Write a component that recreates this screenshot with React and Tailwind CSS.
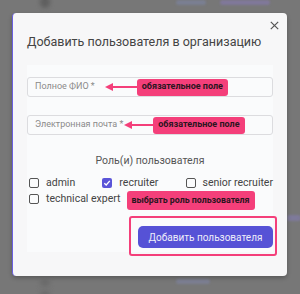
import React from "react";

function Arrow({ width }) {
  return (
    <svg width={width} height="10" viewBox={`0 0 ${width} 10`} className="shrink-0">
      <line x1="3" y1="5" x2={width} y2="5" stroke="#f43f7a" strokeWidth="2" />
      <path d="M0 5 L8 1 L8 9 Z" fill="#f43f7a" />
    </svg>
  );
}

function Badge({ children, className = "" }) {
  return (
    <div
      className={
        "flex items-center rounded-[3px] bg-[#f43f7a] px-[5px] font-bold text-[#2a1520] " +
        className
      }
    >
      {children}
    </div>
  );
}

function Check({ checked, label }) {
  return (
    <div className="flex items-center gap-[7px]">
      {checked ? (
        <div className="flex h-[10px] w-[10px] items-center justify-center rounded-[2px] bg-[#5a54d8]">
          <svg width="8" height="8" viewBox="0 0 8 8">
            <path d="M1.3 4.2 L3.2 6 L6.8 1.8" fill="none" stroke="white" strokeWidth="1.3" />
          </svg>
        </div>
      ) : (
        <div className="h-[10px] w-[10px] rounded-[2px] border-[1.5px] border-[#555]" />
      )}
      <span className="text-[10.5px] leading-[12px] text-[#444]">{label}</span>
    </div>
  );
}

export default function App() {
  return (
    <div
      className="relative h-[294px] w-[300px] overflow-hidden bg-[#777777]"
      style={{ fontFamily: "Roboto, 'Noto Sans', sans-serif" }}
    >
      {/* blurred page behind overlay */}
      <div className="absolute left-[40px] top-[-4px] h-[12px] w-[10px] rounded-full bg-[#5f5f5f] blur-[2px]" />
      <div className="absolute left-[176px] top-[0px] h-[5px] w-[30px] rounded bg-[#7a7f92] blur-[1px]" />
      <div className="absolute left-[220px] top-[0px] h-[5px] w-[50px] rounded bg-[#80789a] blur-[1px]" />
      <div className="absolute left-[40px] top-[280px] h-[6px] w-[10px] rounded-full bg-[#6a6a6a] blur-[2px]" />
      <div className="absolute left-[40px] top-[291px] h-[6px] w-[10px] rounded-full bg-[#6a6a6a] blur-[2px]" />
      <div className="absolute left-[176px] top-[279px] h-[5px] w-[34px] rounded bg-[#7c7f92] blur-[1px]" />
      <div className="absolute left-[287px] top-[215px] h-[6px] w-[14px] rounded bg-[#7e7a9a] blur-[1px]" />

      {/* modal */}
      <div className="absolute left-[12px] top-[13px] flex h-[263px] w-[275px] flex-col rounded-[4px] border-l border-[#6a5fe0] bg-[#f7f7f8] pl-[14px] pr-[14px] pt-[19px] shadow-[0_2px_4px_rgba(0,0,0,0.25)]">
        <svg
          className="absolute right-[8px] top-[8px]"
          width="9"
          height="9"
          viewBox="0 0 9 9"
        >
          <path d="M0.8 0.8 L8.2 8.2 M8.2 0.8 L0.8 8.2" stroke="#555" strokeWidth="1.2" />
        </svg>

        <div className="whitespace-nowrap text-[12.5px] leading-[20px] text-[#444]">
          Добавить пользователя в организацию
        </div>

        <div className="mt-[13px] flex flex-col bg-[#fafbfc] pb-[4px] pt-[12px]">
          <div className="flex h-[20px] items-center rounded-[3px] border border-[#dcdcdf] bg-[#fafbfc] pl-[7px]">
            <span className="text-[9px] text-[#8a8a8a]">Полное ФИО *</span>
            <div className="ml-[10px]">
              <Arrow width={32} />
            </div>
            <Badge className="h-[17px] text-[9px]">обязательное поле</Badge>
          </div>

          <div className="mt-[18px] flex h-[20px] items-center rounded-[3px] border border-[#dcdcdf] bg-[#fafbfc] pl-[7px]">
            <span className="text-[9px] text-[#8a8a8a]">Электронная почта *</span>
            <div className="ml-[1px]">
              <Arrow width={29} />
            </div>
            <Badge className="h-[17px] text-[9px]">обязательное поле</Badge>
          </div>

          <div className="mt-[19px] text-center text-[10.5px] leading-[14px] text-[#555]">
            Роль(и) пользователя
          </div>

          <div className="mt-[9px] flex justify-between pl-[2px]">
            <Check label="admin" />
            <Check checked label="recruiter" />
            <Check label="senior recruiter" />
          </div>

          <div className="mt-[2px] flex h-[19px] items-center pl-[2px]">
            <div className="mb-[4px]">
              <Check label="technical expert" />
            </div>
            <Badge className="ml-[6px] h-[19px] text-[8.8px]">выбрать роль пользователя</Badge>
          </div>

          <div className="mt-[16px] flex justify-end">
            <div className="relative">
              <div className="absolute -bottom-[8px] -left-[9px] -right-[4px] -top-[10px] rounded-[3px] border-2 border-[#f43f7a]" />
              <button className="relative flex h-[22px] w-[135px] items-center justify-center rounded-[5px] bg-[#5652d6] text-[10px] text-[#eeeefa]">
                Добавить пользователя
              </button>
            </div>
          </div>
        </div>
      </div>
    </div>
  );
}
